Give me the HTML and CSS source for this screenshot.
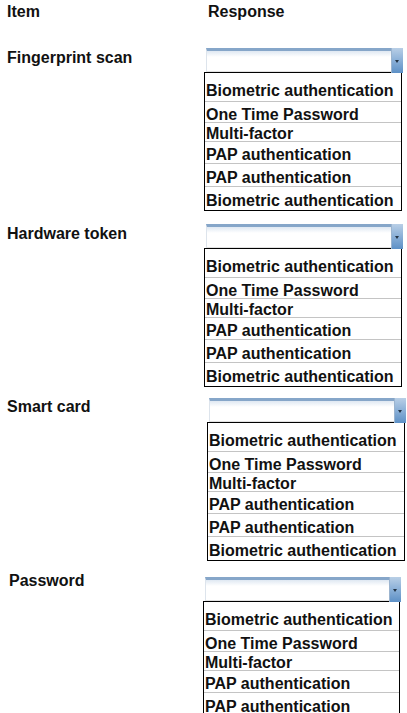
FILE: index.html
```html
<!DOCTYPE html>
<html lang="en">
<head>
    <meta charset="UTF-8">
    <meta name="viewport" content="width=device-width, initial-scale=1.0">
    <title>Item / Response</title>
    <link rel="stylesheet" href="styles.css">
</head>
<body>

<div class="sheet">
    <div class="head">
        <div class="col-item">Item</div>
        <div class="col-resp">Response</div>
    </div>

    <div class="question q1">
        <div class="label">Fingerprint scan</div>
        <div class="resp">
            <div class="select"><span class="arrow"></span></div>
            <ul class="options">
                <li>Biometric authentication</li>
                <li>One Time Password</li>
                <li>Multi-factor</li>
                <li>PAP authentication</li>
                <li>PAP authentication</li>
                <li>Biometric authentication</li>
            </ul>
        </div>
    </div>

    <div class="question q2">
        <div class="label">Hardware token</div>
        <div class="resp">
            <div class="select"><span class="arrow"></span></div>
            <ul class="options">
                <li>Biometric authentication</li>
                <li>One Time Password</li>
                <li>Multi-factor</li>
                <li>PAP authentication</li>
                <li>PAP authentication</li>
                <li>Biometric authentication</li>
            </ul>
        </div>
    </div>

    <div class="question q3">
        <div class="label">Smart card</div>
        <div class="resp">
            <div class="select"><span class="arrow"></span></div>
            <ul class="options">
                <li>Biometric authentication</li>
                <li>One Time Password</li>
                <li>Multi-factor</li>
                <li>PAP authentication</li>
                <li>PAP authentication</li>
                <li>Biometric authentication</li>
            </ul>
        </div>
    </div>

    <div class="question q4">
        <div class="label">Password</div>
        <div class="resp">
            <div class="select"><span class="arrow"></span></div>
            <ul class="options">
                <li>Biometric authentication</li>
                <li>One Time Password</li>
                <li>Multi-factor</li>
                <li>PAP authentication</li>
                <li>PAP authentication</li>
                <li>Biometric authentication</li>
            </ul>
        </div>
    </div>
</div>

</body>
</html>
```

FILE: styles.css
```css
html, body {
    margin: 0;
    background: #fff;
    overflow: hidden;
}
body {
    font-family: "Liberation Sans", Arial, sans-serif;
    font-weight: bold;
    font-size: 16px;
    color: #111;
}
.head {
    display: grid;
    grid-template-columns: 208px 1fr;
    padding-top: 3px;
    line-height: 18px;
}
.col-item {
    padding-left: 7px;
}
.question {
    display: grid;
    grid-template-columns: 204px 198px;
    align-items: start;
}
.label {
    padding-left: 7px;
    line-height: 18px;
}
.resp {
    display: flex;
    flex-direction: column;
}

/* block offsets, the original is not evenly spaced */
.q1 { margin-top: 27px; }
.q1 .label { margin-top: 1px; }
.q2 { margin-top: 13px; }
.q2 .label { margin-top: 1px; }
.q3 { margin-top: 11px; grid-template-columns: 207px 198px; }
.q3 .label { margin-top: 0; }
.q4 { margin-top: 16px; grid-template-columns: 203px 197px; }
.q4 .label { margin-top: -5px; padding-left: 9px; }

/* closed dropdown */
.select {
    height: 24px;
    box-sizing: border-box;
    margin-left: 2px;
    margin-right: -1px;
    border-top: 3px solid #86a6c9;
    border-left: 1px solid #dde4ec;
    border-bottom: 1px solid #e2e2e2;
    background: linear-gradient(#dfe8f2, #fff 30%);
    display: flex;
    justify-content: flex-end;
}
.arrow {
    width: 11px;
    margin-top: -3px;
    margin-bottom: -2px;
    background: linear-gradient(#b9cfe6, #8fb3d9 45%, #5d90c6);
    border-left: 1px solid #9bb4cf;
    position: relative;
}
.arrow::after {
    content: "";
    position: absolute;
    left: 3px;
    top: 12px;
    border-left: 2.5px solid transparent;
    border-right: 2.5px solid transparent;
    border-top: 3px solid #233446;
}

/* option list */
.options {
    list-style: none;
    margin: 0;
    padding: 0;
    border: 1px solid #000;
}
.options li {
    box-sizing: border-box;
    padding-left: 1px;
    line-height: 17px;
    white-space: nowrap;
    border-bottom: 1px solid #c4c4c4;
}
.options li:last-child {
    border-bottom: none;
}
.options li:nth-child(1) { height: 29px; padding-top: 9px; }
.options li:nth-child(2) { height: 21px; padding-top: 4px; }
.options li:nth-child(3) { height: 19px; padding-top: 2px; }
.options li:nth-child(4) { height: 22px; padding-top: 4px; }
.options li:nth-child(5) { height: 23px; padding-top: 5px; }
.options li:nth-child(6) { height: 23px; padding-top: 5px; }
```
